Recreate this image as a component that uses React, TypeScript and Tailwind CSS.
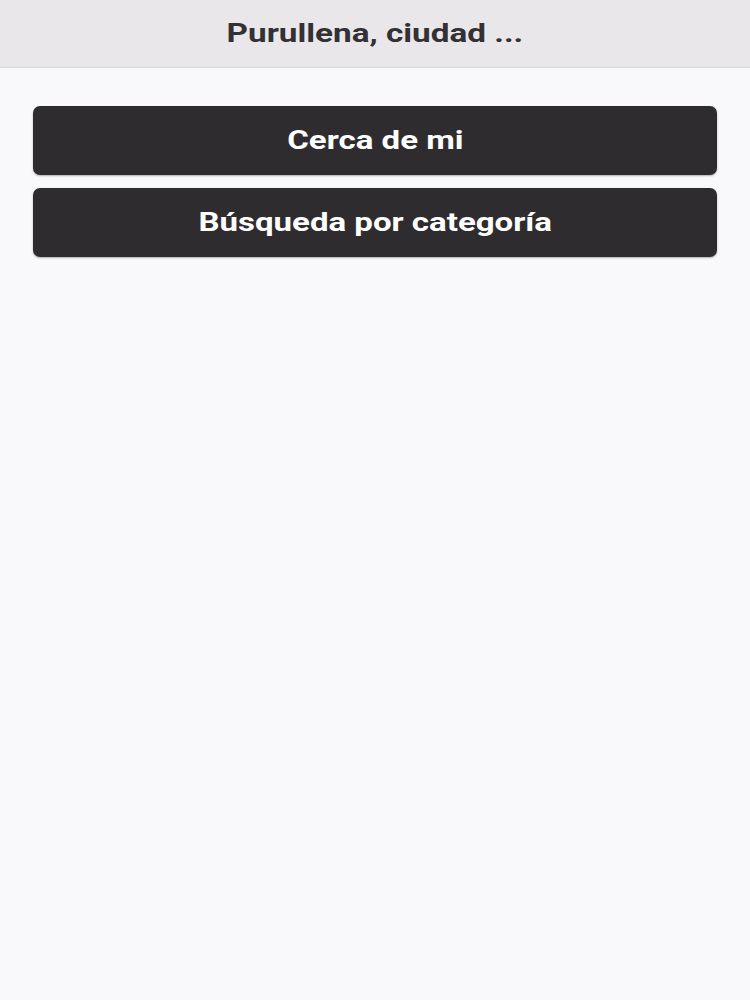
export default function App() {
  const options = ["Cerca de mi", "Búsqueda por categoría"];

  return (
    <div className="min-h-screen bg-[#f9f8fa] font-['Roboto',sans-serif]">
      <header className="h-[68px] flex items-center justify-center bg-[#e9e7ea] border-b border-[#d9d7da]">
        <h1 className="inline-block scale-x-[1.28] text-[26px] font-bold text-[#333134] whitespace-nowrap">
          Purullena, ciudad ...
        </h1>
      </header>

      <div className="px-[33px] pt-[38px] flex flex-col gap-[13px]">
        {options.map((label) => (
          <button
            key={label}
            className="h-[69px] w-full rounded-[7px] bg-[#2f2c30] text-white shadow-[0_1px_2px_rgba(0,0,0,0.3)]"
          >
            <span className="inline-block scale-x-[1.27] text-[26px] font-bold">{label}</span>
          </button>
        ))}
      </div>
    </div>
  );
}
